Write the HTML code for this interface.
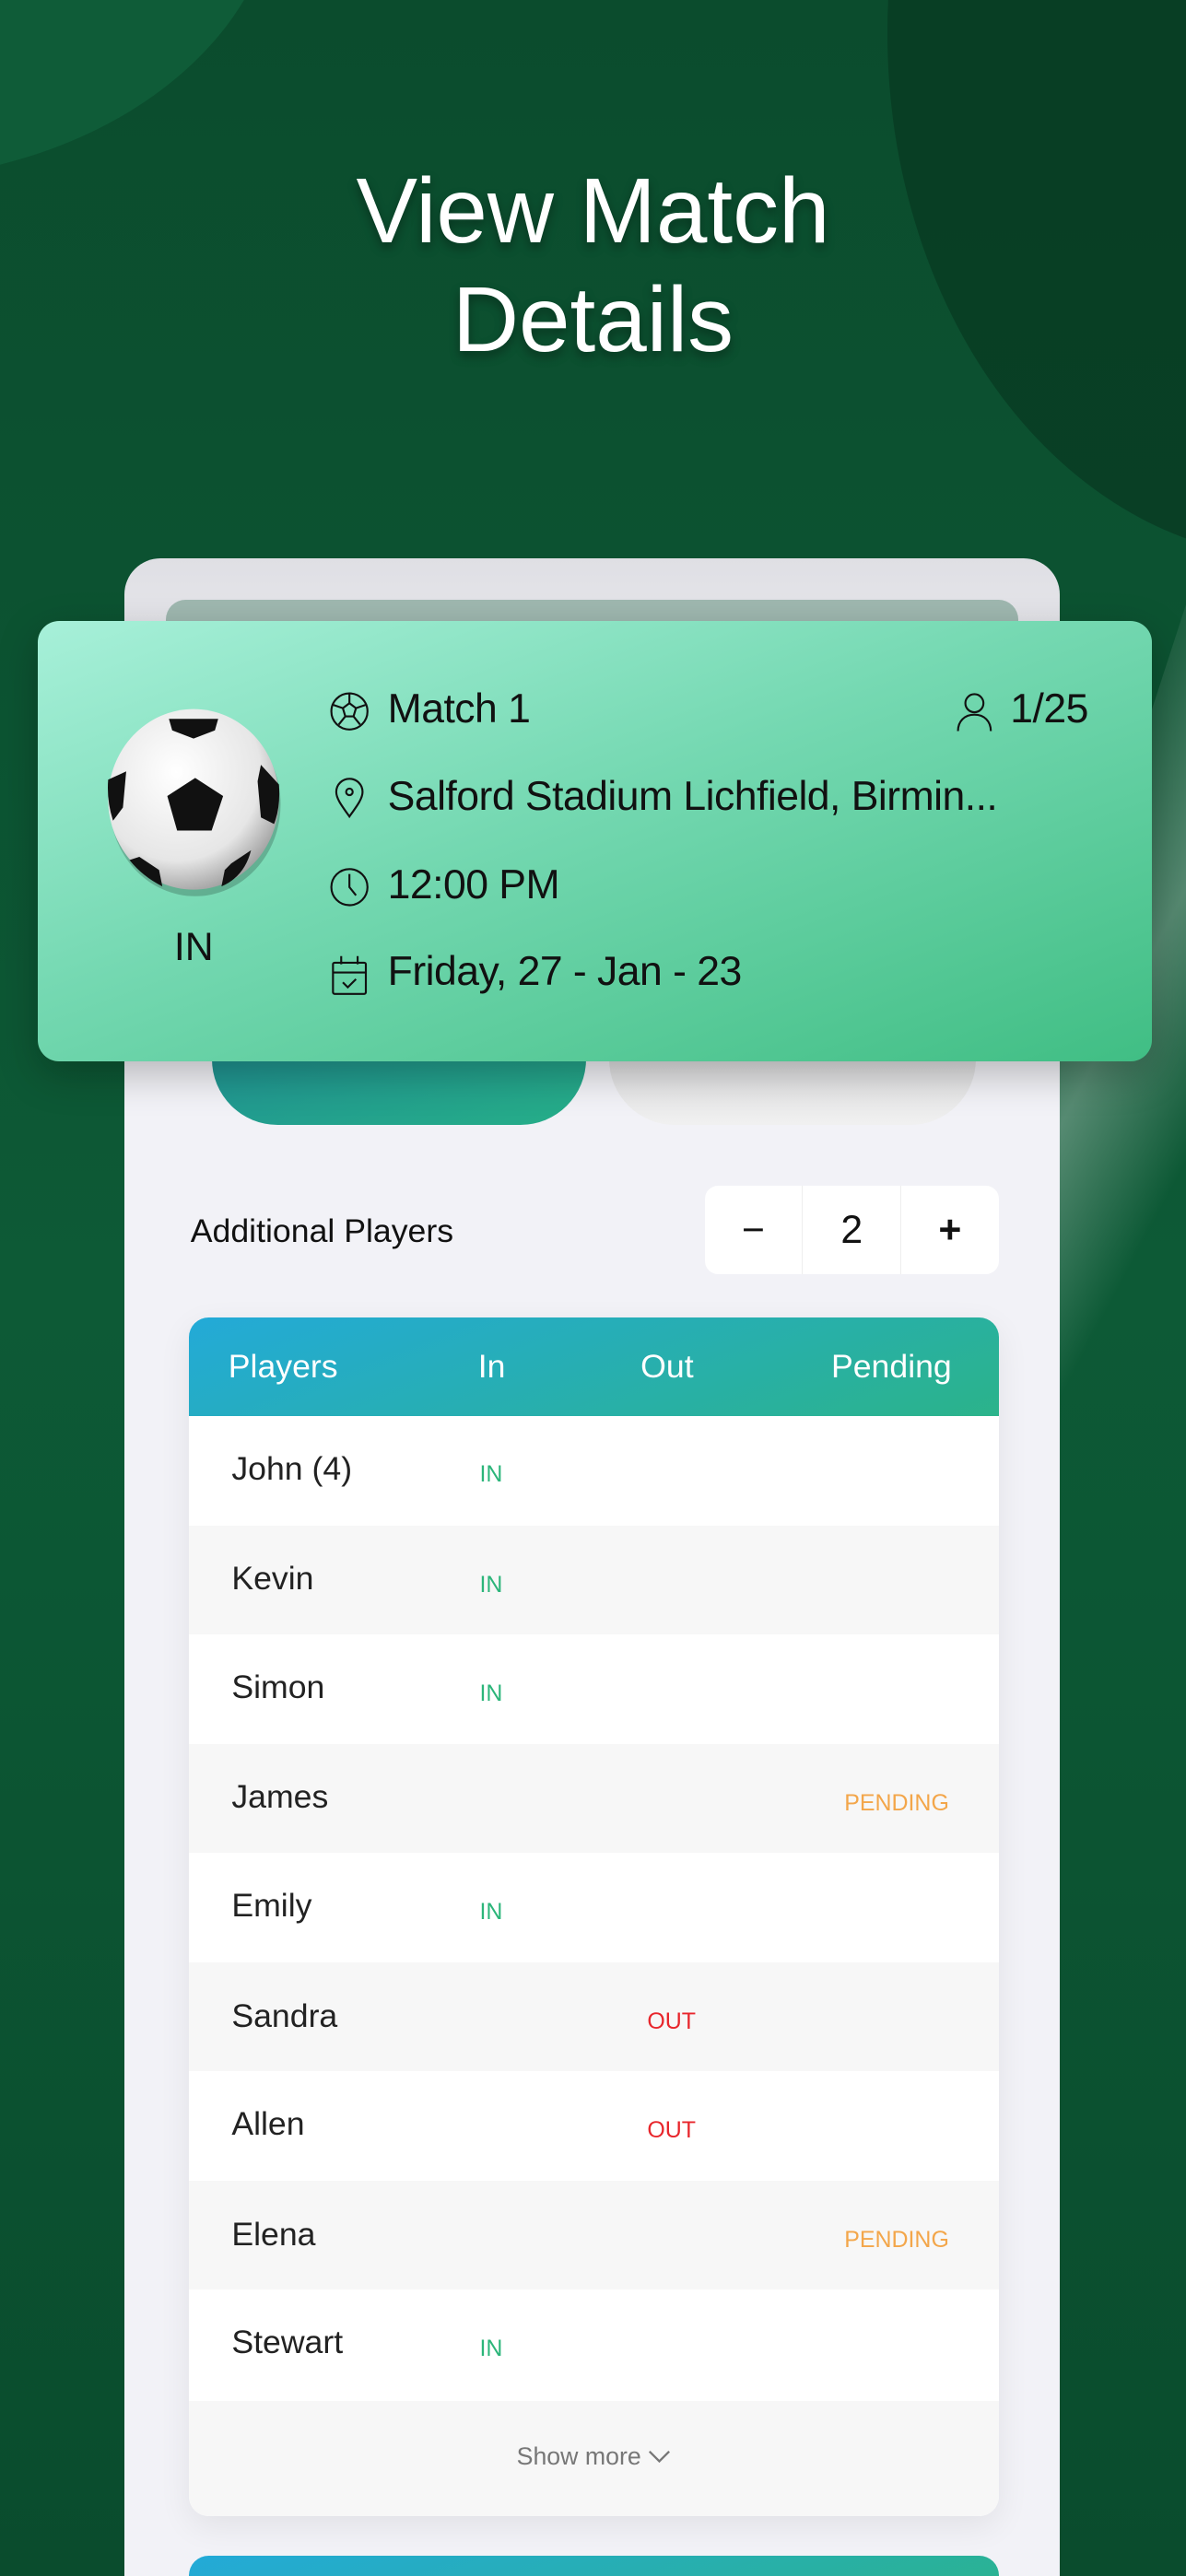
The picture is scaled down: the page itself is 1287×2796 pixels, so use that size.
<!DOCTYPE html>
<html><head><meta charset="utf-8"><style>
*{margin:0;padding:0;box-sizing:border-box}
html,body{width:1287px;height:2796px;overflow:hidden}
body{background:#0a4a2c}
#z{zoom:1.78255;width:722px;height:1569px;position:relative;overflow:hidden;font-family:"Liberation Sans",sans-serif;
background:linear-gradient(180deg,#0b4c2d 0%,#0d5a36 50%,#0a4c2d 100%)}
.abs{position:absolute}
.title{left:0;width:722px;text-align:center;color:#fff;font-size:56px;line-height:66px;top:96px;text-shadow:0 3px 6px rgba(0,0,0,.35)}
.phone{left:76px;top:340px;width:569px;height:1300px;border-radius:22px;background:linear-gradient(180deg,#dfdfe4 0,#f2f2f7 120px,#f2f2f7 100%)}
.card{left:23px;top:378px;width:678px;height:268px;border-radius:13px;background:linear-gradient(160deg,#a7f0d9 0%,#74d8b1 45%,#40be84 100%);box-shadow:0 8px 24px rgba(0,0,0,.25)}
.t{color:#111;font-size:25px;letter-spacing:-0.3px}
.row{left:115px;width:493px;height:66.5px}
.nm{position:absolute;left:26px;top:21px;font-size:20px;color:#222}
.st{position:absolute;top:28px;font-size:14px}
</style></head><body><div id="z">
<div class="abs" style="left:-330px;top:-260px;width:500px;height:370px;border-radius:50%;background:#0f5c38"></div>
<div class="abs" style="left:540px;top:-300px;width:500px;height:640px;border-radius:50%;background:#083a22;opacity:.75"></div>
<div class="abs" style="left:650px;top:250px;width:140px;height:700px;background:linear-gradient(100deg,rgba(255,255,255,0) 0%,rgba(255,255,255,.3) 40%,rgba(255,255,255,0) 70%);transform:rotate(18deg)"></div>
<div class="abs title">View Match<br>Details</div>
<div class="abs phone"></div>
<div class="abs" style="left:101px;top:365px;width:519px;height:30px;border-radius:12px;background:#9fb8b0"></div>
<div class="abs" style="left:129px;top:600px;width:228px;height:85px;border-radius:0 0 40px 40px;background:linear-gradient(160deg,#1e8a96,#26ae88)"></div>
<div class="abs" style="left:371px;top:600px;width:223px;height:85px;border-radius:0 0 40px 40px;background:linear-gradient(180deg,#cfcfd2,#f0f0f0)"></div>
<div class="abs card">
 <svg class="abs" style="left:40px;top:52px" width="112" height="116" viewBox="0 0 112 116">
  <defs><radialGradient id="g" cx=".4" cy=".35" r=".7"><stop offset="0" stop-color="#fff"/><stop offset=".7" stop-color="#e6e6e6"/><stop offset="1" stop-color="#9a9a9a"/></radialGradient></defs>
  <ellipse cx="56" cy="60" rx="52" ry="56" fill="rgba(0,0,0,.2)"/>
  <ellipse cx="55" cy="57" rx="52" ry="55" fill="url(#g)"/>
  <polygon points="56,44 73,55 66,76 45,76 39,55" fill="#111"/>
  <path d="M40 8 L70 8 L68 15 L55 20 L42 15Z" fill="#111"/>
  <path d="M3 45 L14 40 L12 62 L6 70 Q2 58 3 45Z" fill="#111"/>
  <path d="M96 36 L107 48 Q108 62 104 72 L96 68 L94 46Z" fill="#111"/>
  <path d="M22 92 L34 100 L36 110 Q24 104 16 94Z" fill="#111"/>
  <path d="M78 96 L90 88 Q86 104 72 110 L74 100Z" fill="#111"/>
 </svg>
 <div class="abs" style="left:83px;top:185px;font-size:24px;color:#111">IN</div>
 <svg class="abs" style="left:177px;top:42px" width="26" height="200" viewBox="0 0 26 200" fill="none" stroke="#111" stroke-width="1.2">
  <circle cx="13" cy="13" r="11"/><polygon points="13,8 17,11 15.5,16 10.5,16 9,11"/><path d="M13 2v6M17 11l6-2M15.5 16l4 5M10.5 16l-4 5M9 11l-6-2"/>
  <path d="M13 77c-5-7-8-11-8-15a8 8 0 0 1 16 0c0 4-3 8-8 15z"/><circle cx="13" cy="62" r="2"/>
  <circle cx="13" cy="120" r="11"/><path d="M13 112v8l4 5"/>
  <rect x="3" y="166" width="20" height="19" rx="1"/><path d="M3 172h20M8 162v5M18 162v5M9 178l3 3 5-5"/>
 </svg>
 <div class="abs t" style="left:213px;top:40px">Match 1</div>
 <div class="abs t" style="left:213px;top:93px">Salford Stadium Lichfield, Birmin...</div>
 <div class="abs t" style="left:213px;top:147px">12:00 PM</div>
 <div class="abs t" style="left:213px;top:200px">Friday, 27 - Jan - 23</div>
 <svg class="abs" style="left:558px;top:42px" width="24" height="26" viewBox="0 0 24 26" fill="none" stroke="#111" stroke-width="1.2"><circle cx="12" cy="8" r="5.5"/><path d="M2 25c0-6 4-10 10-10s10 4 10 10"/></svg>
 <div class="abs t" style="left:592px;top:40px">1/25</div>
</div>
<div class="abs" style="left:116px;top:738px;font-size:20px;color:#111">Additional Players</div>
<div class="abs" style="left:429px;top:722px;width:179px;height:54px;border-radius:8px;background:#fff;display:flex;font-size:24px;color:#111">
 <div style="flex:1;text-align:center;line-height:54px;border-right:1px solid #eee">−</div>
 <div style="flex:1;text-align:center;line-height:54px;border-right:1px solid #eee">2</div>
 <div style="flex:1;text-align:center;line-height:54px;font-weight:bold">+</div>
</div>
<div class="abs" style="left:115px;top:802px;width:493px;height:730px;border-radius:12px;background:#fff;box-shadow:0 6px 20px rgba(0,0,0,.07);overflow:hidden">
 <div style="height:60px;background:linear-gradient(160deg,#23aad8,#2bb38a);color:#fff;font-size:20px;position:relative">
  <span class="abs" style="left:24px;top:19px">Players</span><span class="abs" style="left:176px;top:19px">In</span><span class="abs" style="left:275px;top:19px">Out</span><span class="abs" style="left:391px;top:19px">Pending</span>
 </div>
</div>
<div class="abs row" style="top:862px;background:#fff"><span class="nm">John (4)</span><span class="st" style="left:177px;color:#2cb57a">IN</span></div>
<div class="abs row" style="top:929px;background:#f7f7f7"><span class="nm">Kevin</span><span class="st" style="left:177px;color:#2cb57a">IN</span></div>
<div class="abs row" style="top:995px;background:#fff"><span class="nm">Simon</span><span class="st" style="left:177px;color:#2cb57a">IN</span></div>
<div class="abs row" style="top:1062px;background:#f7f7f7"><span class="nm">James</span><span class="st" style="left:399px;color:#f3a64a">PENDING</span></div>
<div class="abs row" style="top:1128px;background:#fff"><span class="nm">Emily</span><span class="st" style="left:177px;color:#2cb57a">IN</span></div>
<div class="abs row" style="top:1195px;background:#f7f7f7"><span class="nm">Sandra</span><span class="st" style="left:279px;color:#e8262c">OUT</span></div>
<div class="abs row" style="top:1261px;background:#fff"><span class="nm">Allen</span><span class="st" style="left:279px;color:#e8262c">OUT</span></div>
<div class="abs row" style="top:1328px;background:#f7f7f7"><span class="nm">Elena</span><span class="st" style="left:399px;color:#f3a64a">PENDING</span></div>
<div class="abs row" style="top:1394px;background:#fff"><span class="nm">Stewart</span><span class="st" style="left:177px;color:#2cb57a">IN</span></div>
<div class="abs" style="left:115px;top:1462px;width:493px;height:70px;border-radius:0 0 12px 12px;background:#f7f7f7;text-align:center;line-height:68px;font-size:15px;color:#777">Show more <svg width="14" height="9" viewBox="0 0 14 9" fill="none" stroke="#777" stroke-width="1.3"><path d="M1 1l6 6 6-6"/></svg></div>
<div class="abs" style="left:115px;top:1556px;width:493px;height:40px;border-radius:12px 12px 0 0;background:linear-gradient(160deg,#23aad8,#2bb38a)"></div>
</div></body></html>
